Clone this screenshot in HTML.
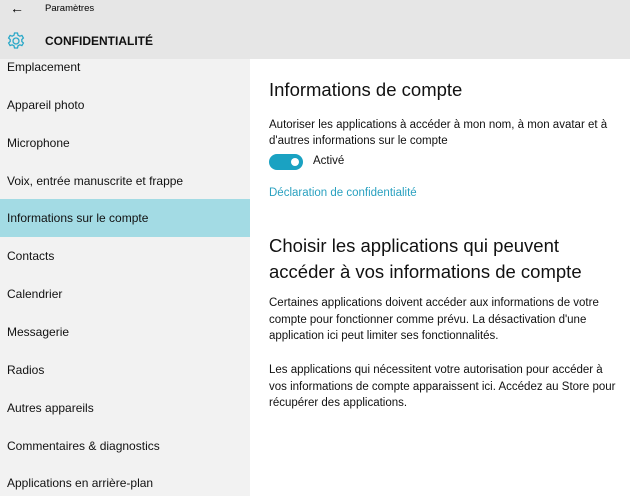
<!DOCTYPE html>
<html><head><meta charset="utf-8"><style>
body{margin:0;width:630px;height:496px;overflow:hidden;background:#fff;font-family:"Liberation Sans",sans-serif;color:#000;position:relative}
.hdr{position:absolute;left:0;top:0;width:630px;height:59px;background:#e6e6e6}
.side{position:absolute;left:0;top:59px;width:250px;height:437px;background:#f2f2f2}
.it{position:absolute;left:7px;font-size:12px;line-height:16px;color:#111}
.sel{position:absolute;left:0;top:199px;width:250px;height:38px;background:#a3dbe4}
.t{position:absolute;left:269px;color:#111}
</style></head><body>
<div class="hdr">
<div style="position:absolute;left:10px;top:0px;font-size:14px">&#8592;</div>
<div style="position:absolute;left:45px;top:3px;font-size:9.5px">Paramètres</div>
<svg style="position:absolute;left:6px;top:31px" width="20" height="20" viewBox="0 0 20 20"><g fill="none" stroke="#2aa8c8" stroke-width="1.3"><circle cx="10" cy="10" r="3"/><path d="M8.5 2h3l.5 2.2 1.8 1 2.1-.8 1.5 2.6-1.6 1.5v2l1.6 1.5-1.5 2.6-2.1-.8-1.8 1-.5 2.2h-3l-.5-2.2-1.8-1-2.1.8-1.5-2.6 1.6-1.5v-2L2.6 7l1.5-2.6 2.1.8 1.8-1z"/></g></svg>
<div style="position:absolute;left:45px;top:34px;font-size:12px;font-weight:bold;color:#111">CONFIDENTIALITÉ</div>
</div>
<div class="side"></div>
<div class="sel"></div>
<div class="it" style="top:59px">Emplacement</div>
<div class="it" style="top:97px">Appareil photo</div>
<div class="it" style="top:135px">Microphone</div>
<div class="it" style="top:173px">Voix, entrée manuscrite et frappe</div>
<div class="it" style="top:210px">Informations sur le compte</div>
<div class="it" style="top:248px">Contacts</div>
<div class="it" style="top:286px">Calendrier</div>
<div class="it" style="top:324px">Messagerie</div>
<div class="it" style="top:362px">Radios</div>
<div class="it" style="top:400px">Autres appareils</div>
<div class="it" style="top:438px">Commentaires &amp; diagnostics</div>
<div class="it" style="top:475px">Applications en arrière-plan</div>
<div class="t" style="top:79px;font-size:18.5px">Informations de compte</div>
<div class="t" style="top:117px;font-size:11.5px;line-height:16px;width:350px">Autoriser les applications à accéder à mon nom, à mon avatar et à d'autres informations sur le compte</div>
<div style="position:absolute;left:269px;top:154px;width:34px;height:16px;border-radius:8px;background:#1aa2c2"><div style="position:absolute;right:4px;top:4px;width:8px;height:8px;border-radius:4px;background:#fff"></div></div>
<div class="t" style="left:313px;top:155px;font-size:11.5px">Activé</div>
<div class="t" style="top:187px;font-size:11.5px;color:#2aa1c0">Déclaration de confidentialité</div>
<div class="t" style="top:233px;font-size:18.5px;line-height:26px;width:340px">Choisir les applications qui peuvent accéder à vos informations de compte</div>
<div class="t" style="top:295px;font-size:11.5px;line-height:16.5px;width:355px">Certaines applications doivent accéder aux informations de votre compte pour fonctionner comme prévu. La désactivation d'une application ici peut limiter ses fonctionnalités.</div>
<div class="t" style="top:362px;font-size:11.5px;line-height:16.5px;width:352px">Les applications qui nécessitent votre autorisation pour accéder à vos informations de compte apparaissent ici. Accédez au Store pour récupérer des applications.</div>
</body></html>
